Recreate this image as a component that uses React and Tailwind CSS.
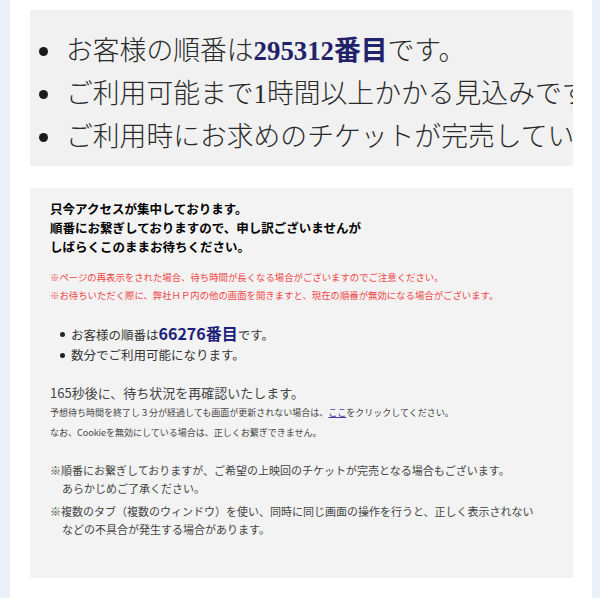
export default function App() {
  const jp = { fontFamily: '"Noto Sans CJK JP", "Liberation Sans", sans-serif' }
  const serif = { fontFamily: '"Liberation Serif", "Noto Sans CJK JP", serif' }

  const BigDot = () => <span className="ml-[9px] mr-[18px] h-[9px] w-[9px] shrink-0 rounded-full bg-[#1a1a1a]" />
  const SmallDot = () => <span className="ml-[10px] mr-[6px] h-[5px] w-[5px] shrink-0 rounded-full bg-[#222]" />

  return (
    <div className="min-h-[598px] bg-[#eaf0fa] pl-[10px] pr-[8px]" style={jp}>
      <div className="min-h-[598px] bg-white pl-[20px] pr-[19px] pt-[10px] pb-[20px]">
        {/* Top zoomed panel */}
        <div className="h-[156px] overflow-hidden bg-[#f1f1f1] pt-[20px] text-[#2a2a2a]" style={serif}>
          <ul className="text-[26.8px] leading-[43px] whitespace-nowrap">
            <li className="flex items-center">
              <BigDot />
              <span className="font-light">
                お客様の順番は<span className="font-bold text-[#22226a]">295312番目</span>です。
              </span>
            </li>
            <li className="flex items-center">
              <BigDot />
              <span className="font-light">ご利用可能まで1時間以上かかる見込みです。</span>
            </li>
            <li className="flex items-center">
              <BigDot />
              <span className="font-light">ご利用時にお求めのチケットが完売している場合があります。</span>
            </li>
          </ul>
        </div>

        {/* Waiting room panel */}
        <div className="mt-[22px] h-[390px] bg-[#f3f3f3] pl-[20px] pr-[10px] pt-[11px] text-[#3a3a3a]">
          <div className="text-[12.5px] leading-[19px] font-bold text-black">
            <p>只今アクセスが集中しております。</p>
            <p>順番にお繋ぎしておりますので、申し訳ございませんが</p>
            <p>しばらくこのままお待ちください。</p>
          </div>

          <div className="mt-[12px] text-[9.4px] leading-[18px] text-[#f04545]">
            <p>※ページの再表示をされた場合、待ち時間が長くなる場合がございますのでご注意ください。</p>
            <p>※お待ちいただく際に、弊社ＨＰ内の他の画面を開きますと、現在の順番が無効になる場合がございます。</p>
          </div>

          <ul className="mt-[19px] text-[12.5px] leading-[20px] text-[#333]">
            <li className="flex items-center">
              <SmallDot />
              <span>
                お客様の順番は<span className="text-[16px] font-bold text-[#1d1f7a]">66276番目</span>です。
              </span>
            </li>
            <li className="flex items-center">
              <SmallDot />
              <span>数分でご利用可能になります。</span>
            </li>
          </ul>

          <p className="mt-[18px] text-[13px] leading-[20px] text-[#444]">165秒後に、待ち状況を再確認いたします。</p>
          <div className="text-[9px] leading-[20px] text-[#444]">
            <p>
              予想待ち時間を終了し３分が経過しても画面が更新されない場合は、
              <span className="text-[#4a3aa8] underline">ここ</span>をクリックしてください。
            </p>
            <p>なお、Cookieを無効にしている場合は、正しくお繋ぎできません。</p>
          </div>

          <div className="mt-[18px] text-[11px] leading-[18px] text-[#444]">
            <p>※順番にお繋ぎしておりますが、ご希望の上映回のチケットが完売となる場合もございます。</p>
            <p className="pl-[12px]">あらかじめご了承ください。</p>
          </div>
          <div className="mt-[5px] text-[11px] leading-[18px] text-[#444]">
            <p>※複数のタブ（複数のウィンドウ）を使い、同時に同じ画面の操作を行うと、正しく表示されない</p>
            <p className="pl-[12px]">などの不具合が発生する場合があります。</p>
          </div>
        </div>
      </div>
    </div>
  )
}
